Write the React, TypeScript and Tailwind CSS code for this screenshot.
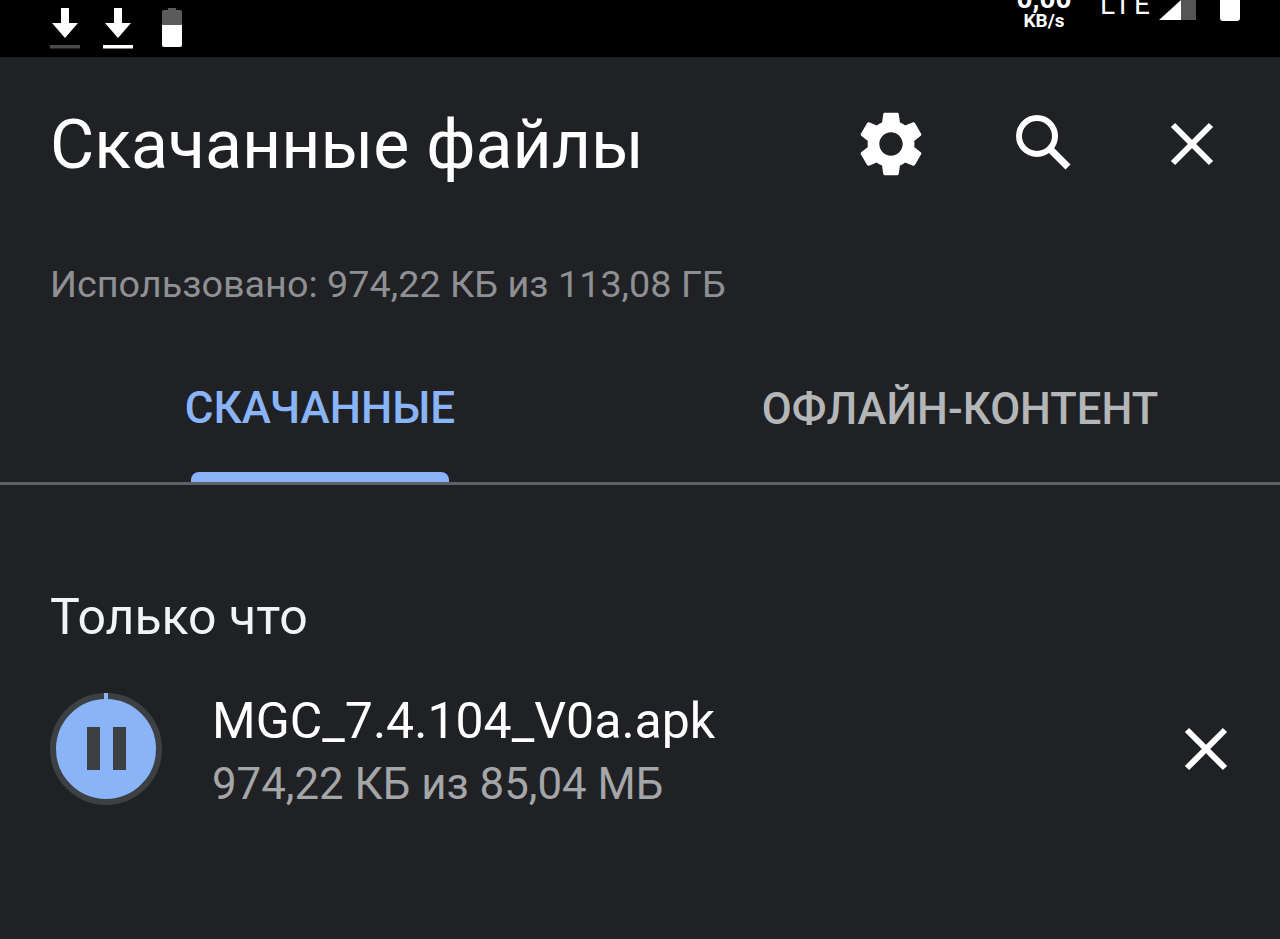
import React from 'react';

const CloseIcon = ({ size }: { size: number }) => (
  <svg width={size} height={size} viewBox="0 0 44 44" fill="none" stroke="#ffffff" strokeWidth="6">
    <path d="M3 3 L41 41 M41 3 L3 41" />
  </svg>
);

const DownloadIcon = ({ barColor }: { barColor: string }) => (
  <svg width="32" height="42" viewBox="0 0 32 42">
    <path d="M12 0 H20 V15 H29 L16 30 L3 15 H12 Z" fill="#fff" />
    <rect x="1" y="37" width="30" height="3.5" fill={barColor} />
  </svg>
);

const StatusBar = () => (
  <div className="relative flex h-[57px] items-start justify-between overflow-hidden bg-black">
    <div className="flex items-start gap-[21px] pl-[49px] pt-[8px]">
      <DownloadIcon barColor="#4a4a4a" />
      <DownloadIcon barColor="#ffffff" />
      <svg width="22" height="40" viewBox="0 0 22 40" className="ml-[6px]">
        <path d="M7 0 H15 V2 H19 Q21 2 21 4 V17 H1 V4 Q1 2 3 2 H7 Z" fill="#5a5a5a" />
        <path d="M1 17 H21 V37 Q21 39 19 39 H3 Q1 39 1 37 Z" fill="#fff" />
      </svg>
    </div>
    <div className="flex items-start pr-[40px] font-['Roboto',sans-serif] text-white">
      <div className="-mt-[14px] flex w-[60px] flex-col items-center font-bold leading-none">
        <span className="text-[28px] leading-[26px]">0,00</span>
        <span className="text-[19px] leading-[17px]">KB/s</span>
      </div>
      <span className="-mt-[9px] ml-[26px] text-[28px] leading-[27px] tracking-[3px]">LTE</span>
      <svg width="38" height="22" viewBox="0 0 38 22" className="ml-[6px]">
        <path d="M0 20 L22 0 V20 Z" fill="#fff" />
        <path d="M22 0 H37 V20 H22 Z" fill="#555" />
      </svg>
      <div className="ml-[23px] h-[21px] w-[20px] rounded-b-[3px] bg-white" />
    </div>
  </div>
);

export default function App() {
  return (
    <div className="flex h-[939px] w-[1280px] flex-col overflow-hidden bg-[#202124] font-['Roboto',sans-serif]">
      <StatusBar />

      <div className="flex h-[205px] items-start justify-between pl-[50px] pr-[66px] pt-[50px]">
        <h1 className="text-[68px] leading-[76px] text-white">Скачанные файлы</h1>
        <div className="-mt-[2px] flex items-center">
          <svg width="78" height="78" viewBox="0 0 24 24" fill="#fff">
            <path d="M19.14 12.94c.04-.3.06-.61.06-.94 0-.32-.02-.64-.07-.94l2.03-1.58c.18-.14.23-.41.12-.61l-1.92-3.32c-.12-.22-.37-.29-.59-.22l-2.39.96c-.5-.38-1.03-.7-1.62-.94l-.36-2.54c-.04-.24-.24-.41-.48-.41h-3.84c-.24 0-.43.17-.47.41l-.36 2.54c-.59.24-1.13.57-1.62.94l-2.39-.96c-.22-.08-.47 0-.59.22L2.74 8.87c-.12.21-.08.47.12.61l2.03 1.58c-.05.3-.09.63-.09.94s.02.64.07.94l-2.03 1.58c-.18.14-.23.41-.12.61l1.92 3.32c.12.22.37.29.59.22l2.39-.96c.5.38 1.03.7 1.62.94l.36 2.54c.05.24.24.41.48.41h3.84c.24 0 .44-.17.47-.41l.36-2.54c.59-.24 1.13-.56 1.62-.94l2.39.96c.22.08.47 0 .59-.22l1.92-3.32c.12-.22.07-.47-.12-.61l-2.01-1.58zM12 15.6c-1.98 0-3.6-1.62-3.6-3.6s1.62-3.6 3.6-3.6 3.6 1.62 3.6 3.6-1.62 3.6-3.6 3.6z" />
          </svg>
          <svg width="58" height="58" viewBox="0 0 58 58" fill="none" stroke="#fff" strokeWidth="6" className="ml-[85px] -mt-[2px]">
            <circle cx="22" cy="22" r="18" />
            <path d="M35 35 L53 53" strokeWidth="7" />
          </svg>
          <div className="ml-[97px]">
            <CloseIcon size={44} />
          </div>
        </div>
      </div>

      <div className="pl-[50px] text-[37.8px] leading-[44px] text-[#8f9093]">Использовано: 974,22 КБ из 113,08 ГБ</div>

      <div className="relative mt-[76px] flex h-[103px] border-b-[3px] border-[#5f6063]">
        <div className="flex w-[640px] justify-center pt-[1px] text-[44px] font-medium leading-[50px] text-[#8ab4f8]">
          СКАЧАННЫЕ
        </div>
        <div className="flex w-[640px] justify-center pt-[3px] text-[43.5px] font-medium leading-[50px] text-[#b5b6b8]">
          ОФЛАЙН-КОНТЕНТ
        </div>
        <div className="absolute bottom-0 left-[191px] h-[10px] w-[258px] rounded-t-[8px] bg-[#8ab4f8]" />
      </div>

      <div className="pl-[50px] pt-[105px] text-[50px] leading-[54px] text-[#f1f3f4]">Только что</div>

      <div className="mt-[37px] flex items-center pl-[50px] pr-[52px]">
        <div className="relative flex h-[112px] w-[112px] shrink-0 items-center justify-center rounded-full border-[6px] border-[#3c4043] bg-[#8ab4f8]">
          <div className="flex gap-[13px]">
            <div className="h-[43px] w-[13px] bg-[#3c4043]" />
            <div className="h-[43px] w-[13px] bg-[#3c4043]" />
          </div>
          <div className="absolute -top-[6px] left-[48px] h-[6px] w-[4px] bg-[#8ab4f8]" />
        </div>
        <div className="ml-[50px] flex-1 pt-[9px]">
          <div className="text-[50px] leading-[63px] text-white">MGC_7.4.104_V0a.apk</div>
          <div className="text-[43.8px] leading-[63px] text-[#a5a6a8]">974,22 КБ из 85,04 МБ</div>
        </div>
        <CloseIcon size={44} />
      </div>
    </div>
  );
}
